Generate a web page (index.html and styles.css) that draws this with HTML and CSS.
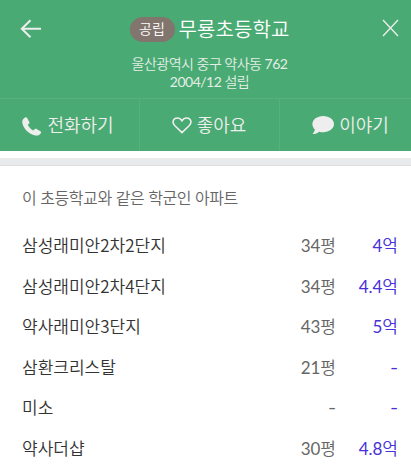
FILE: index.html
```
<!DOCTYPE html>
<html lang="ko">
    <head>
        <meta charset="utf-8">
        <title>무룡초등학교</title>
        <link rel="stylesheet" href="styles.css">
    </head>
    <body>
        <div class="header">
            <div class="header-top">
                <svg class="back" width="22" height="20" viewBox="0 0 22 20"><path d="M10.500 1.200L1.800 9.800l8.700 8.400M2 9.800h19"/></svg>
                <div class="school">
                    <div class="title"><span class="badge">공립</span><h1>무룡초등학교</h1></div>
                    <div class="address">울산광역시 중구 약사동 762<br>2004/12 설립</div>
                </div>
                <svg class="close" width="17" height="18" viewBox="0 0 17 18"><path d="M1 1l15 16M16 1L1 17"/></svg>
            </div>
            <div class="buttons">
                <div class="button call">
                    <svg width="20" height="19" viewBox="0 0 20 19"><path d="M2.700 .8C3.700 .1 4.700 .2 5.300 1.200l2 3.700c.4.8.2 1.300-.4 1.800L5.800 7.600c.9 2.400 2.700 4.600 5.300 5.900l1.500-1.200c.6-.5 1.200-.6 1.900-.2l3.900 2.200c.8.5.9 1.100.4 1.900-1.100 1.900-3.100 2.700-5.500 2.300C6.600 17.200 1 11.200 .3 5.500 .1 3.400 .9 1.900 2.700 .8z"/></svg>
                    <span>전화하기</span>
                </div>
                <div class="button like">
                    <svg width="20" height="17" viewBox="0 0 20 17"><path d="M10 15.600L2.900 8.800C-.7 5 1.500 1 5.400 1c2 0 3.500 1.100 4.600 2.800C11.100 2.100 12.600 1 14.600 1c3.900 0 6.100 4 2.500 7.800z"/></svg>
                    <span>좋아요</span>
                </div>
                <div class="button talk">
                    <svg width="22" height="19" viewBox="0 0 22 19"><path d="M11.200 0C17.200 0 22 3.600 22 8.100s-4.800 8.200-10.800 8.200c-1.500 0-2.900-.2-4.100-.6C5.500 17.100 3.300 18 .5 18c1.300-1.300 2.100-2.700 2.300-4.400C1.300 12.200.4 10.200.4 8.100.4 3.600 5.200 0 11.200 0z"/></svg>
                    <span>이야기</span>
                </div>
            </div>
        </div>
        <div class="divider"></div>
        <div class="apartments">
            <h2>이 초등학교와 같은 학군인 아파트</h2>
            <div class="row"><span class="name">삼성래미안2차2단지</span><span class="size">34평</span><span class="price">4억</span></div>
            <div class="row"><span class="name">삼성래미안2차4단지</span><span class="size">34평</span><span class="price">4.4억</span></div>
            <div class="row"><span class="name">약사래미안3단지</span><span class="size">43평</span><span class="price">5억</span></div>
            <div class="row"><span class="name">삼환크리스탈</span><span class="size">21평</span><span class="price"><span class="none">-</span></span></div>
            <div class="row"><span class="name">미소</span><span class="size"><span class="none">-</span></span><span class="price"><span class="none">-</span></span></div>
            <div class="row"><span class="name">약사더샵</span><span class="size">30평</span><span class="price">4.8억</span></div>
        </div>
    </body>
</html>
```
FILE: styles.css
```
body {
    margin: 0;
    height: 471px;
    overflow: hidden;
    background: #fff;
    font-family: Lato, "Noto Sans CJK KR DemiLight", "Noto Sans CJK KR", sans-serif;
    color: #333;
}
.header {
    height: 151px;
    background: #4aaa73;
    color: #fff;
}
.header-top {
    display: flex;
    justify-content: space-between;
    box-sizing: border-box;
    height: 98px;
    padding: 0 12px 0 20px;
}
.header-top svg {
    fill: none;
    stroke: #eee;
}
.back {
    margin-top: 19px;
    stroke-width: 2;
}
.close {
    margin-top: 19px;
    stroke-width: 1.3;
}
.school {
    padding: 17px 5px 0 0;
    text-align: center;
}
.title {
    display: flex;
    align-items: center;
    justify-content: center;
    gap: 4px;
    height: 25px;
}
.title h1 {
    margin: 0;
    font-size: 20px;
    font-weight: 350;
    line-height: 27px;
    letter-spacing: 0.1px;
}
.badge {
    width: 45px;
    height: 25px;
    border-radius: 13px;
    background: #81756d;
    font-size: 14px;
    line-height: 24px;
}
.address {
    margin-top: 13px;
    font-size: 14px;
    line-height: 18px;
    letter-spacing: -0.5px;
    color: #e3eee7;
}
.buttons {
    display: flex;
    height: 52px;
    border-top: 1px solid #56b27d;
}
.button {
    display: flex;
    align-items: center;
    justify-content: center;
    box-sizing: border-box;
    width: 140px;
    padding-right: 3px;
    gap: 5px;
    border-right: 1px solid #56b27d;
    font-size: 18px;
    font-weight: 350;
    line-height: 52px;
    color: #eee;
}
.button svg {
    fill: #eee;
}
.call svg {
    margin-top: 2px;
}
.like {
    padding-right: 1px;
}
.like svg {
    fill: none;
    stroke: #eee;
    stroke-width: 1.6;
}
.talk {
    width: 131px;
    padding: 0 0 0 10px;
    border-right: none;
}
.divider {
    height: 7px;
    margin-top: 7px;
    border-bottom: 1px solid #ddd;
    background: #e9eaec;
}
.apartments {
    padding: 20px 13px 0 22px;
}
.apartments h2 {
    margin: 0 0 15px;
    font-size: 16px;
    font-weight: 350;
    line-height: 24px;
    letter-spacing: -0.42px;
    color: #666;
}
.row {
    display: flex;
    height: 40.5px;
    font-size: 17px;
    line-height: 41px;
}
.name {
    flex: 1;
    font-family: "Noto Sans CJK KR DemiLight", "Noto Sans CJK KR", sans-serif;
    font-weight: 350;
    line-height: 40px;
}
.size {
    color: #666;
}
.price {
    width: 62px;
    text-align: right;
    color: #4630d8;
}
.none {
    display: inline-block;
    transform: scaleX(1.3);
    transform-origin: right;
}
```
